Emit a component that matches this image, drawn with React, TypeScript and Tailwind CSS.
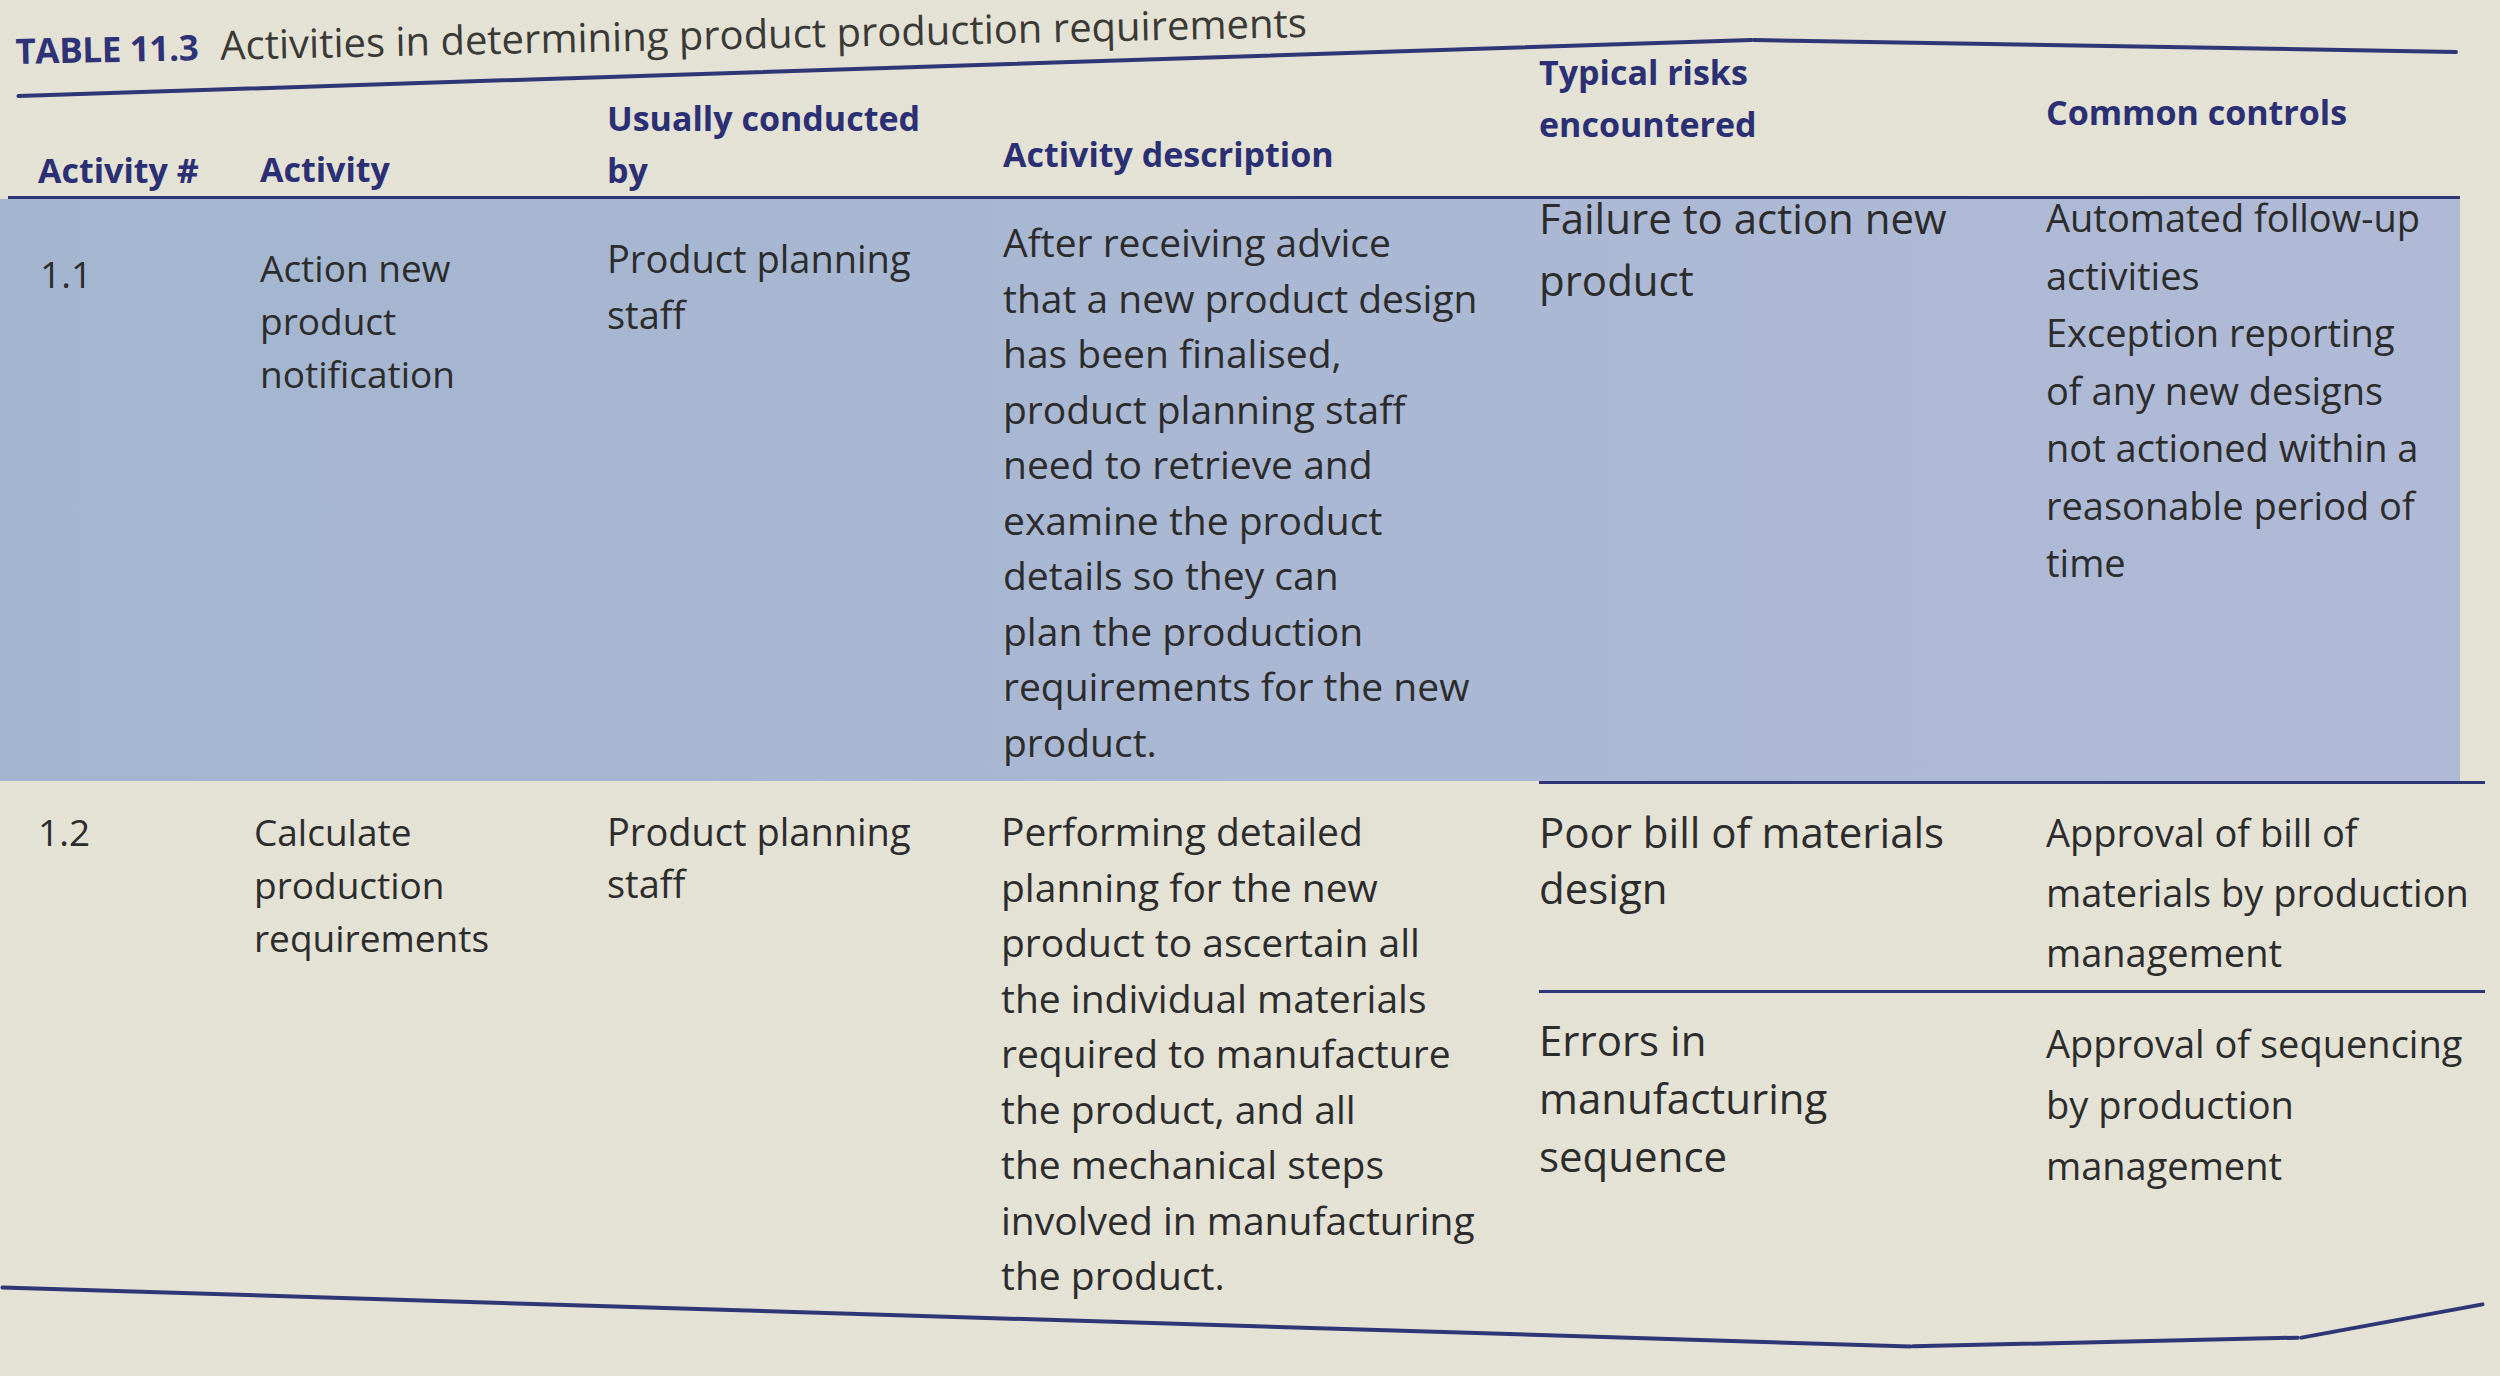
import React from "react";

/**
 * Textbook table "TABLE 11.3": a title with a rule, a bold navy header row,
 * a blue-shaded first activity and a plain second one whose risks/controls
 * are split into two sub-rows. The rules follow the page's curl a little.
 */

function Lines({ lines, className }: { lines: string[]; className: string }) {
  return (
    <div className={className}>
      {lines.map((l, i) => (
        <div key={i} className="whitespace-nowrap">
          {l}
        </div>
      ))}
    </div>
  );
}

function Head({ lines, className }: { lines: string[]; className: string }) {
  return (
    <div className={`flex min-h-0 flex-col justify-end ${className}`}>
      {lines.map((l, i) => (
        <div key={i} className="shrink-0 whitespace-nowrap">
          {l}
        </div>
      ))}
    </div>
  );
}

export default function App() {
  return (
    <div className="min-h-screen w-full overflow-hidden bg-[#e4e1d5] font-['Open_Sans','Liberation_Sans',sans-serif] text-[#2c2c2c]">
      {/* title */}
      <div className="flex h-[79px] items-end pl-4">
        <h1 className="origin-bottom-left -rotate-[1.2deg] whitespace-nowrap text-[40px] leading-normal">
          <span className="text-[35px] font-bold tracking-[-0.01em] text-[#2e3277]">
            TABLE 11.3
          </span>
          <span className="ml-[22px] text-[#3a3936]">
            Activities in determining product production requirements
          </span>
        </h1>
      </div>
      <div className="-mt-[13px] flex h-[4px] items-start pl-4">
        <div className="h-[4px] w-[1738px] shrink-0 -rotate-[1.85deg] rounded-full bg-[#2f3676]" />
        <div className="-ml-[2px] h-[4px] w-[706px] shrink-0 -translate-y-[22px] rotate-[0.97deg] rounded-full bg-[#2f3676]" />
      </div>

      {/* header row */}
      <div className="grid h-[126px] w-[2460px] grid-cols-[260px_347px_396px_536px_507px_414px] grid-rows-[126px] text-[34px] font-bold leading-[52px] text-[#2b2f74]">
        <Head lines={["Activity #"]} className="pb-[0px] pl-[38px]" />
        <Head lines={["Activity"]} className="pb-[1px]" />
        <Head lines={["Usually conducted", "by"]} className="pb-[0px]" />
        <Head lines={["Activity description"]} className="pb-[16px]" />
        <Head lines={["Typical risks", "encountered"]} className="pb-[46px]" />
        <Head lines={["Common controls"]} className="pb-[58px]" />
      </div>
      <div className="ml-2 h-[3px] w-[2452px] bg-[#2f3676]" />

      {/* 1.1 */}
      <div className="grid h-[582px] w-[2460px] grid-cols-[260px_347px_396px_536px_507px_414px] bg-linear-to-r from-[#a3b5cf] to-[#b0bad6] text-[38px]">
        <Lines lines={["1.1"]} className="pl-[40px] pt-[48px] text-[37px] leading-[53px]" />
        <Lines lines={["Action new", "product", "notification"]} className="pt-[42px] text-[37px] leading-[53px]" />
        <Lines lines={["Product planning", "staff"]} className="pt-[31px] leading-[56px]" />
        <Lines
          lines={[
            "After receiving advice",
            "that a new product design",
            "has been finalised,",
            "product planning staff",
            "need to retrieve and",
            "examine the product",
            "details so they can",
            "plan the production",
            "requirements for the new",
            "product.",
          ]}
          className="pt-[15px] text-[39px] leading-[55.5px]"
        />
        <Lines lines={["Failure to action new", "product"]} className="-mt-[12px] text-[42px] leading-[62px]" />
        <Lines
          lines={[
            "Automated follow-up",
            "activities",
            "Exception reporting",
            "of any new designs",
            "not actioned within a",
            "reasonable period of",
            "time",
          ]}
          className="-mt-[10px] leading-[57.5px]"
        />
      </div>

      {/* 1.2 */}
      <div className="grid h-[529px] w-[2485px] grid-cols-[260px_347px_396px_536px_946px] text-[38px]">
        <Lines lines={["1.2"]} className="pl-[38px] pt-[24px] text-[37px] leading-[53px]" />
        <Lines
          lines={["Calculate", "production", "requirements"]}
          className="-ml-[6px] pt-[24px] text-[37px] leading-[53px]"
        />
        <Lines lines={["Product planning", "staff"]} className="pt-[24px] leading-[52px]" />
        <Lines
          lines={[
            "Performing detailed",
            "planning for the new",
            "product to ascertain all",
            "the individual materials",
            "required to manufacture",
            "the product, and all",
            "the mechanical steps",
            "involved in manufacturing",
            "the product.",
          ]}
          className="-ml-[2px] pt-[22px] text-[39px] leading-[55.5px]"
        />
        <div className="flex flex-col">
          <div className="grid h-[209px] grid-cols-[507px_1fr] border-t-[3px] border-[#2f3676]">
            <Lines
              lines={["Poor bill of materials", "design"]}
              className="pt-[20px] text-[42px] leading-[56px]"
            />
            <Lines
              lines={["Approval of bill of", "materials by production", "management"]}
              className="pt-[18px] leading-[60px]"
            />
          </div>
          <div className="grid grid-cols-[507px_1fr] border-t-[3px] border-[#2f3676]">
            <Lines
              lines={["Errors in", "manufacturing", "sequence"]}
              className="pt-[18px] text-[42px] leading-[58px]"
            />
            <Lines
              lines={["Approval of sequencing", "by production", "management"]}
              className="pt-[20px] leading-[61px]"
            />
          </div>
        </div>
      </div>
      <div className="flex h-[4px] items-start">
        <div className="h-[4px] w-[1913px] shrink-0 translate-y-[5px] rotate-[1.77deg] rounded-full bg-[#2f3676]" />
        <div className="-ml-[2px] h-[4px] w-[389px] shrink-0 translate-y-[30px] -rotate-[1.3deg] rounded-full bg-[#2f3676]" />
        <div className="-ml-[2px] h-[4px] w-[188px] shrink-0 translate-y-[9px] -rotate-[10.4deg] rounded-full bg-[#2f3676]" />
      </div>
    </div>
  );
}
